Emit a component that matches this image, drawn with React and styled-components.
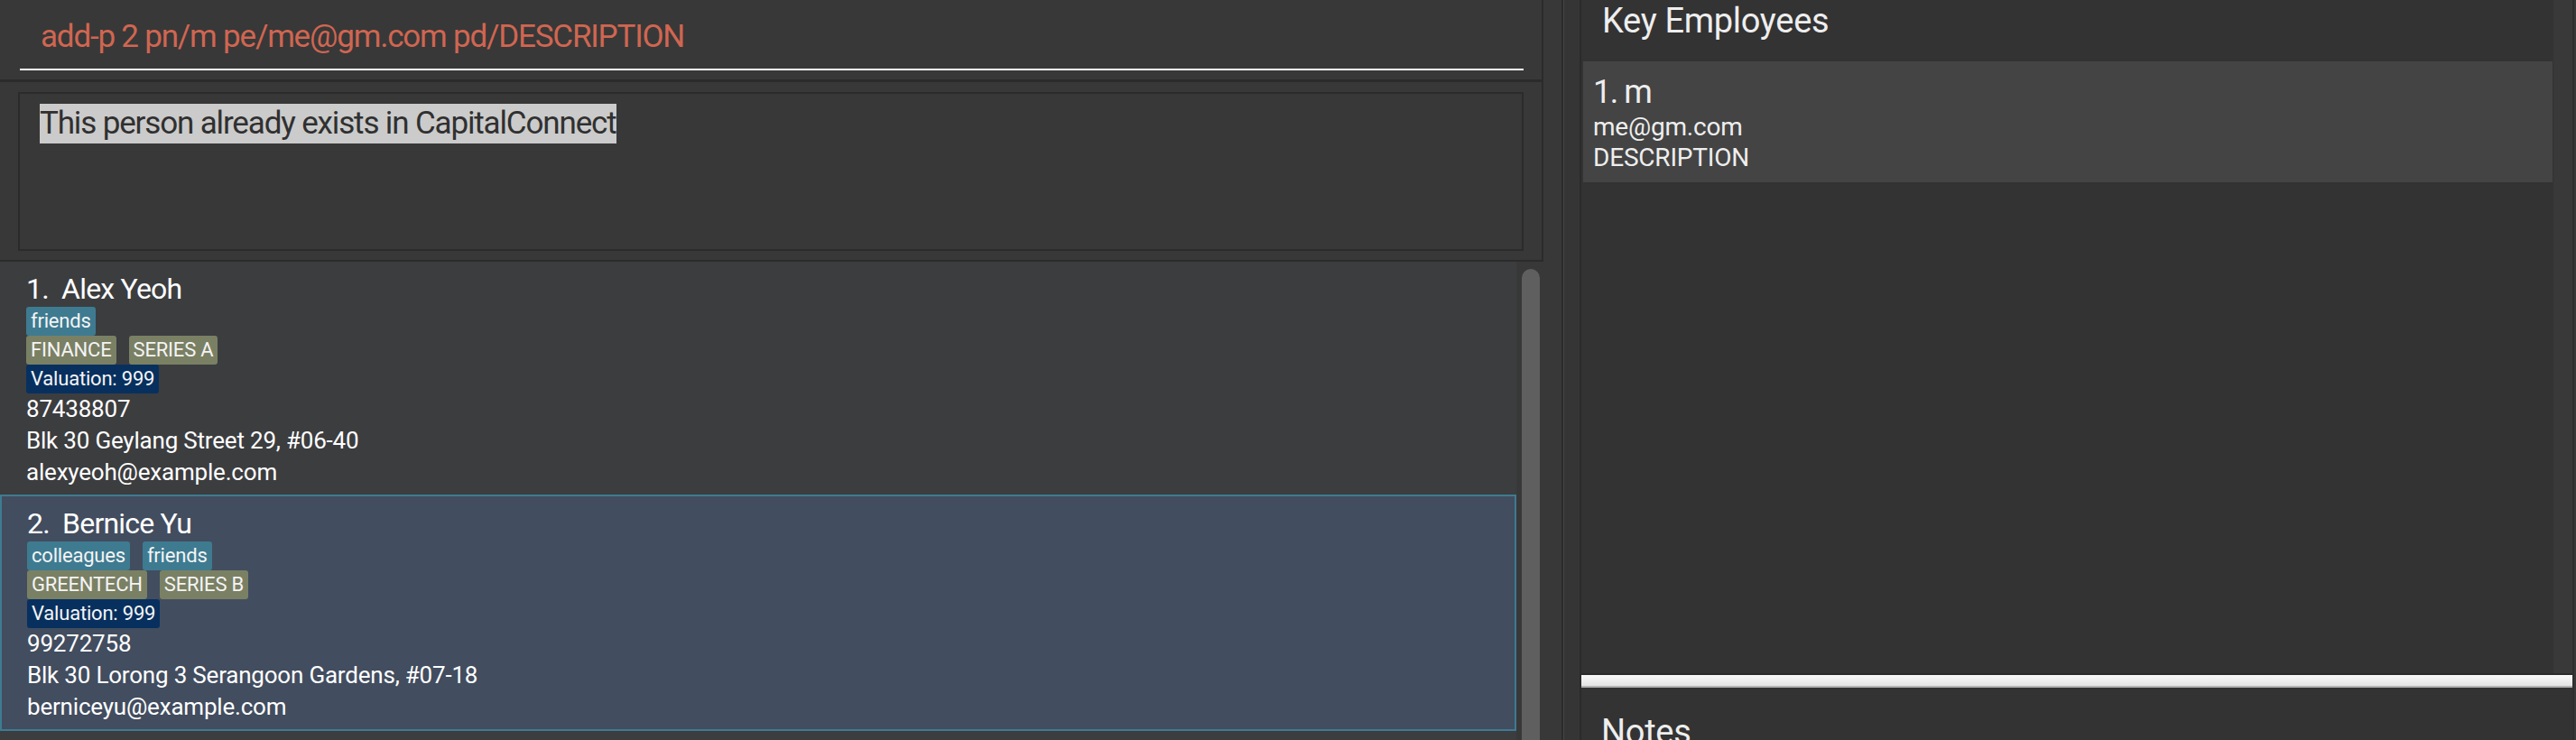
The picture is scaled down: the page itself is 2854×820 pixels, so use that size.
import React from 'react';
import styled, { createGlobalStyle } from 'styled-components';

const GlobalStyle = createGlobalStyle`
  body {
    margin: 0;
    background: #383838;
    font-family: Roboto, "Liberation Sans", sans-serif;
  }
`

const Page = styled.div`
  display: flex;
  width: 2854px;
  height: 820px;
  overflow: hidden;
  background: #383838;
`

const LeftPane = styled.div`
  width: 1730px;
  display: flex;
  flex-direction: column;
  background: #383838;
`

const CommandBox = styled.div`
  box-sizing: border-box;
  width: 1710px;
  height: 91px;
  flex-shrink: 0;
  padding: 0 20px 0 22px;
  border-right: 2px solid #2b2b2b;
  border-bottom: 3px solid #2b2b2b;
`

const CommandField = styled.div`
  box-sizing: border-box;
  height: 78px;
  padding: 20px 0 0 23px;
  border-bottom: 2px solid #ffffff;
  font-size: 35px;
  line-height: 42px;
  letter-spacing: -1.2px;
  color: #d06651;
  white-space: nowrap;
`

const ResultSection = styled.div`
  box-sizing: border-box;
  width: 1710px;
  height: 199px;
  flex-shrink: 0;
  padding: 11px 20px 10px 20px;
  border-right: 2px solid #2b2b2b;
  border-bottom: 2px solid #2b2b2b;
`

const ResultBox = styled.div`
  box-sizing: border-box;
  height: 100%;
  padding: 11px 22px;
  border: 2px solid #2b2b2b;
`

const Selected = styled.span`
  display: inline-block;
  background: #cbcbcb;
  color: #303030;
  font-size: 35px;
  line-height: 44px;
  letter-spacing: -1.15px;
`

const ListPane = styled.div`
  width: 1710px;
  flex: 1;
  min-height: 0;
  display: flex;
  overflow: hidden;
`

const CardList = styled.div`
  width: 1680px;
  background: #3c3d3f;
`

const ScrollTrack = styled.div`
  display: flex;
  flex-direction: column;
  width: ${p => p.wide ? 30 : 21}px;
  box-sizing: border-box;
  padding: ${p => p.wide ? '8px 4px 0 6px' : '0'};
  background: ${p => p.wide ? 'transparent' : '#393939'};
`

const Thumb = styled.div`
  flex: 1;
  background: #5f5f5f;
  border-radius: 10px 10px 0 0;
`

const PersonCard = styled.div`
  padding: 11px 0 7px ${p => p.selected ? 28 : 29}px;
  background: ${p => p.selected ? '#424d5f' : 'transparent'};
  border: ${p => p.selected ? '2px solid #3e7b91' : 'none'};
  color: #ffffff;
`

const Name = styled.div`
  font-size: 32px;
  line-height: 39px;
  letter-spacing: -0.8px;
  white-space: pre;
`

const TagRow = styled.div`
  display: flex;
  gap: 14px;
`

const tagColors = {
  tag: '#3e7b91',
  sector: '#7a8064',
  value: '#07305f',
}

const Tag = styled.span`
  height: 32px;
  padding: 0 5px;
  border-radius: 3px;
  background: ${p => tagColors[p.kind]};
  color: #f4f4f4;
  font-size: 22px;
  line-height: 32px;
  letter-spacing: -0.2px;
`

const Detail = styled.div`
  font-size: 26px;
  line-height: 35px;
  letter-spacing: -0.2px;
`

const SplitDivider = styled.div`
  box-sizing: border-box;
  width: 22px;
  background: #353535;
  border-left: 2px solid #2b2b2b;
  border-right: 2px solid #2b2b2b;
  box-shadow: inset 1px 0 #454545;
`

const RightPane = styled.div`
  width: 1098px;
  display: flex;
  flex-direction: column;
  background: #333333;
  border-right: 2px solid #2e2e2e;
  color: #eeeeee;
`

const TopSection = styled.div`
  height: 746px;
  flex-shrink: 0;
  display: flex;
  border-bottom: 2px solid #2b2b2b;
`

const EmployeeArea = styled.div`
  flex: 1;
`

const SectionHeader = styled.div`
  box-sizing: border-box;
  height: ${p => p.notes ? 'auto' : '68px'};
  padding: ${p => p.notes ? '26px' : '0'} 0 0 ${p => p.notes ? 22 : 23}px;
  font-size: 38px;
  line-height: 46px;
  letter-spacing: -0.3px;
`

const EmployeeCard = styled.div`
  margin: 0 1px 0 2px;
  padding: 12px 11px 10px;
  background: #444444;
`

const EmpName = styled.div`
  font-size: 36px;
  line-height: 44px;
  letter-spacing: -1.5px;
`

const EmpLine = styled.div`
  font-size: 28px;
  line-height: 34px;
  letter-spacing: -0.2px;
`

const SplitBar = styled.div`
  height: 12px;
  flex-shrink: 0;
  background: linear-gradient(#fafafa, #e4e4e4);
  border-bottom: 2px solid #b4b4b4;
`

const NotesSection = styled.div`
  flex: 1;
  min-height: 0;
  overflow: hidden;
`

const people = [
  {
    name: 'Alex Yeoh',
    tags: ['friends'],
    sectors: ['FINANCE', 'SERIES A'],
    valuation: '999',
    phone: '87438807',
    address: 'Blk 30 Geylang Street 29, #06-40',
    email: 'alexyeoh@example.com',
  },
  {
    name: 'Bernice Yu',
    tags: ['colleagues', 'friends'],
    sectors: ['GREENTECH', 'SERIES B'],
    valuation: '999',
    phone: '99272758',
    address: 'Blk 30 Lorong 3 Serangoon Gardens, #07-18',
    email: 'berniceyu@example.com',
    selected: true,
  },
]

function App() {
  return (
    <>
      <GlobalStyle/>
      <Page>
        <LeftPane>
          <CommandBox>
            <CommandField>add-p 2 pn/m pe/me@gm.com pd/DESCRIPTION</CommandField>
          </CommandBox>
          <ResultSection>
            <ResultBox>
              <Selected>This person already exists in CapitalConnect</Selected>
            </ResultBox>
          </ResultSection>
          <ListPane>
            <CardList>
              {people.map((p, i) => (
                <PersonCard key={p.name} selected={p.selected}>
                  <Name>{`${i + 1}.  ${p.name}`}</Name>
                  <TagRow>
                    {p.tags.map(t => <Tag key={t} kind="tag">{t}</Tag>)}
                  </TagRow>
                  <TagRow>
                    {p.sectors.map(t => <Tag key={t} kind="sector">{t}</Tag>)}
                  </TagRow>
                  <TagRow>
                    <Tag kind="value">Valuation: {p.valuation}</Tag>
                  </TagRow>
                  <Detail>{p.phone}</Detail>
                  <Detail>{p.address}</Detail>
                  <Detail>{p.email}</Detail>
                </PersonCard>
              ))}
            </CardList>
            <ScrollTrack wide>
              <Thumb/>
            </ScrollTrack>
          </ListPane>
        </LeftPane>
        <SplitDivider/>
        <RightPane>
          <TopSection>
            <EmployeeArea>
              <SectionHeader>Key Employees</SectionHeader>
              <EmployeeCard>
                <EmpName>1. m</EmpName>
                <EmpLine>me@gm.com</EmpLine>
                <EmpLine>DESCRIPTION</EmpLine>
              </EmployeeCard>
            </EmployeeArea>
            <ScrollTrack/>
          </TopSection>
          <SplitBar/>
          <NotesSection>
            <SectionHeader notes>Notes</SectionHeader>
          </NotesSection>
        </RightPane>
      </Page>
    </>
  )
}

export default App;
